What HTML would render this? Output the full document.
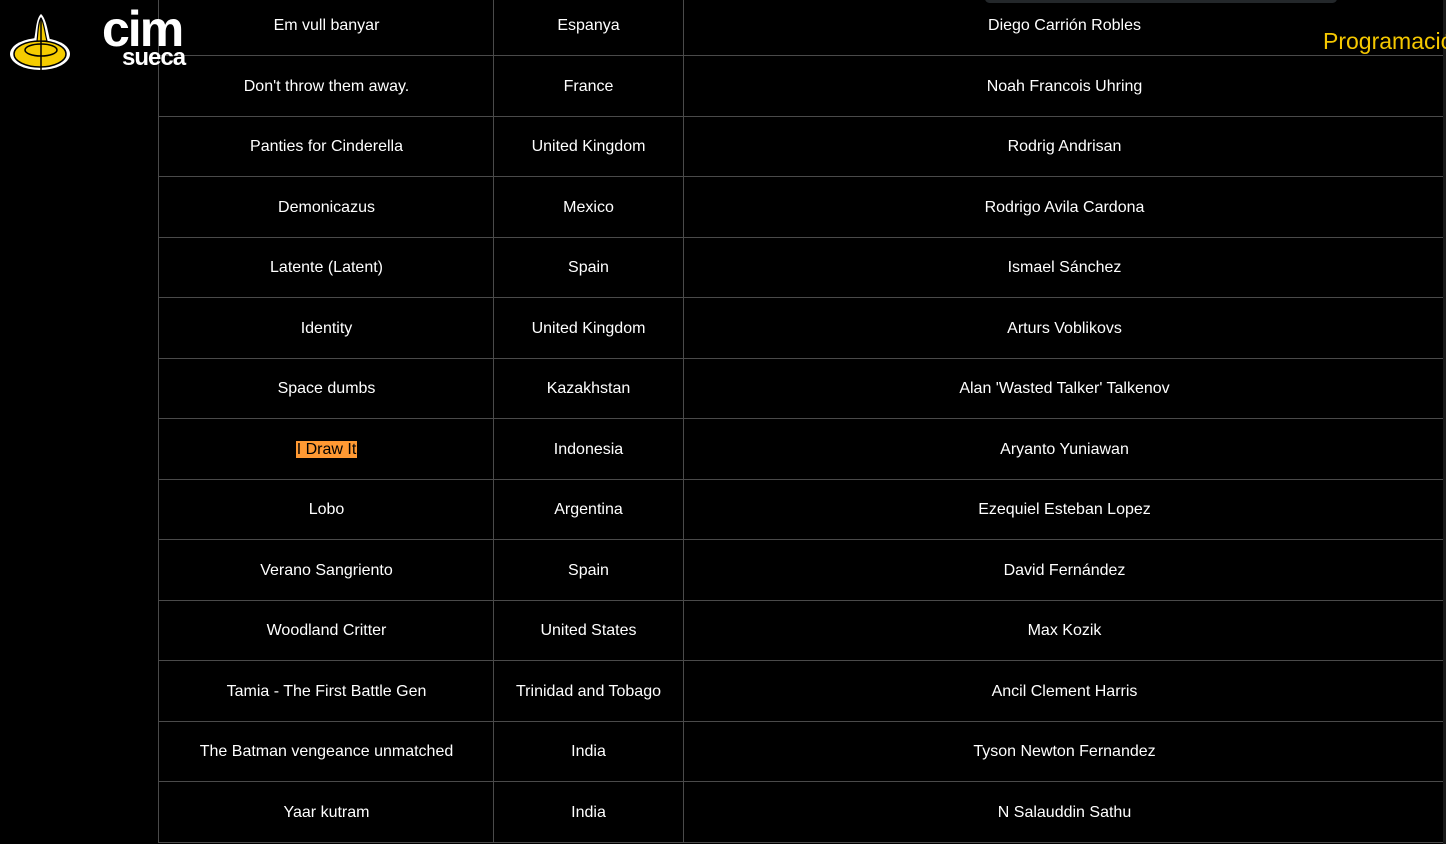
<!DOCTYPE html>
<html><head><meta charset="utf-8"><style>
html,body{margin:0;padding:0;background:#000;width:1446px;height:844px;overflow:hidden;font-family:"Liberation Sans",sans-serif;}
.r{position:absolute;left:158px;width:1288px;height:60px;border-bottom:1px solid #4a4a4a;}
.c{position:absolute;top:0;height:61px;line-height:62px;text-align:center;color:#fff;font-size:16px;}
.c1{left:0;width:335px;border-left:1px solid #4a4a4a;}
.c2{left:335px;width:189px;border-left:1px solid #4a4a4a;}
.c3{left:525px;width:761px;border-left:1px solid #4a4a4a;}
.hl{background:#ff9933;color:#000;padding:0 1px;}
</style></head><body>
<div id="rows"></div>
<div style="position:absolute;left:985px;top:-6px;width:352px;height:9px;background:#23272a;border-radius:5px;"></div>
<div style="position:absolute;left:1443px;top:0;width:3px;height:844px;background:#1a1a1a;"></div>
<div style="position:absolute;left:1323px;top:28px;color:#f5c800;font-size:23px;white-space:nowrap;">Programación</div>
<svg style="position:absolute;left:8px;top:10px" width="66" height="64" viewBox="0 0 66 64">
<ellipse cx="32" cy="44" rx="30" ry="16" fill="#fff"/>
<ellipse cx="32" cy="44" rx="26" ry="13" fill="#f5cc00" stroke="#000" stroke-width="1.5"/>
<path d="M33 4 C28 8 28 22 26 30 L42 30 C40 22 38 8 33 4Z" fill="#fff"/>
<path d="M33 8 C30 12 30 24 29 31 L39 31 C37 24 36 12 33 8Z" fill="#f5cc00" stroke="#000" stroke-width="1.2"/>
<ellipse cx="33" cy="40" rx="16" ry="6" fill="none" stroke="#000" stroke-width="1.5"/>
<line x1="33" y1="8" x2="33" y2="60" stroke="#000" stroke-width="1.5"/>
</svg>
<div style="position:absolute;left:102px;top:6px;color:#fff;font-weight:bold;font-size:50px;letter-spacing:-2px;line-height:46px;">cim</div>
<div style="position:absolute;left:122px;top:47px;color:#fff;font-weight:bold;font-size:24px;letter-spacing:-1px;line-height:22px;">sueca</div>
<script>
var d=[["Em vull banyar","Espanya","Diego Carrión Robles"],["Don't throw them away.","France","Noah Francois Uhring"],["Panties for Cinderella","United Kingdom","Rodrig Andrisan"],["Demonicazus","Mexico","Rodrigo Avila Cardona"],["Latente (Latent)","Spain","Ismael Sánchez"],["Identity","United Kingdom","Arturs Voblikovs"],["Space dumbs","Kazakhstan","Alan 'Wasted Talker' Talkenov"],["<span class=hl>I Draw It</span>","Indonesia","Aryanto Yuniawan"],["Lobo","Argentina","Ezequiel Esteban Lopez"],["Verano Sangriento","Spain","David Fernández"],["Woodland Critter","United States","Max Kozik"],["Tamia - The First Battle Gen","Trinidad and Tobago","Ancil Clement Harris"],["The Batman vengeance unmatched","India","Tyson Newton Fernandez"],["Yaar kutram","India","N Salauddin Sathu"]];
var h="";for(var i=0;i<d.length;i++){var t=Math.round(-5+i*60.5);h+='<div class="r" style="top:'+t+'px"><div class="c c1">'+d[i][0]+'</div><div class="c c2">'+d[i][1]+'</div><div class="c c3">'+d[i][2]+'</div></div>';}
document.getElementById("rows").innerHTML=h;
</script>
</body></html>
